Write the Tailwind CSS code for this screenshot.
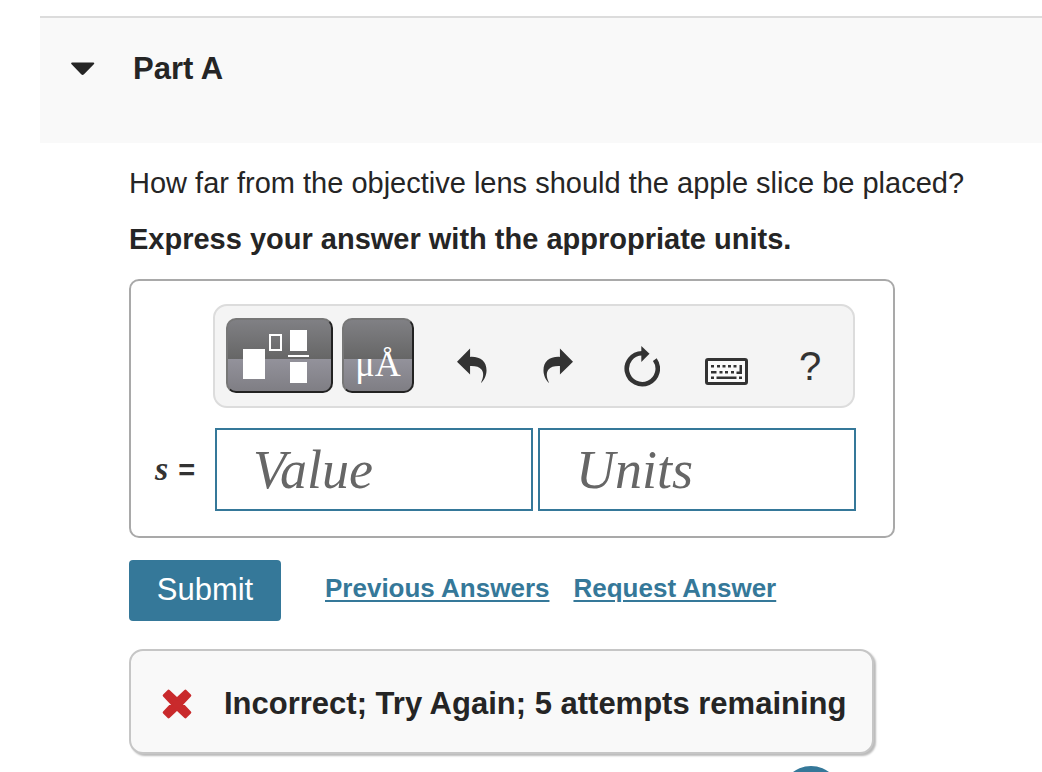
<!DOCTYPE html>
<html lang="en">
<head>
  <meta charset="UTF-8">
  <meta name="viewport" content="width=device-width, initial-scale=1.0">
  <title>Part A</title>
  <script src="https://cdn.jsdelivr.net/npm/@tailwindcss/browser@4"></script>
</head>
<body class="h-screen overflow-hidden bg-white pt-4 text-[#252525] font-['Liberation_Sans',Arial,sans-serif]">
  <!-- Part header -->
  <header class="ml-10 h-[127px] border-t-2 border-[#dcdcdc] bg-[#f9f9f9] pt-[31px]">
    <h2 class="text-[31px] leading-[40px] font-bold">
      <button type="button" aria-expanded="true" class="flex items-center gap-[38px] pl-[31px]">
        <svg class="w-6 h-[14px]" viewBox="0 0 24 14" fill="#252525" aria-hidden="true">
          <path d="M1.2 0.5H22.2C23.4 0.5 23.6 1.4 22.8 2.2L13 12.2C12 13.3 11.2 13.3 10.2 12.2L0.6 2.2C-0.2 1.4 0 0.5 1.2 0.5Z"/>
        </svg>
        Part A
      </button>
    </h2>
  </header>

  <main class="pl-[129px] pt-5">
    <p class="text-[29px] leading-[40px]">How far from the objective lens should the apple slice be placed?</p>
    <p class="mt-4 text-[29px] leading-[40px] font-bold">Express your answer with the appropriate units.</p>

    <form>
      <!-- Answer box -->
      <div class="mt-5 max-w-[766px] rounded-[10px] border-2 border-[#a9a9a9] pt-[23px] pb-[25px]">
        <div role="toolbar" class="ml-[82px] mr-[38px] flex h-[104px] items-start rounded-[14px] border-2 border-[#dcdcdc] bg-[#f4f4f4] pl-[11px] pt-3 text-[#333]">
          <button type="button" aria-label="Templates" class="h-[75px] w-[107px] rounded-[10px] border-2 border-t-[#777] border-l-[#777] border-r-[#222] border-b-[#222] bg-[linear-gradient(#808084_0%,#666_55%,#93929b_55%,#7f7e84_100%)]">
            <svg class="h-[71px] w-[103px]" viewBox="2 2 103 71" fill="#fff" aria-hidden="true">
              <rect x="17" y="31" width="22" height="30"/>
              <rect x="44" y="17" width="11" height="15" fill="none" stroke="#fff" stroke-width="2"/>
              <rect x="64" y="12" width="17" height="21"/>
              <rect x="62" y="37" width="21" height="2"/>
              <rect x="64" y="44" width="17" height="21"/>
            </svg>
          </button>
          <button type="button" aria-label="Symbols" class="ml-[9px] flex h-[75px] w-[72px] justify-center rounded-[10px] border-2 border-t-[#777] border-l-[#777] border-r-[#222] border-b-[#222] bg-[linear-gradient(#808084_0%,#666_55%,#93929b_55%,#7f7e84_100%)] pt-6 text-[36px] leading-[40px] text-white font-['Liberation_Serif',serif]">μÅ</button>

          <div class="ml-4 flex">
            <button type="button" aria-label="Undo" class="flex h-[75px] w-[84px] justify-center pt-[30px]">
              <svg class="h-9 w-[30px]" viewBox="0 0 31 36" fill="currentColor" aria-hidden="true">
                <path d="M0 13.5L13.5 0V8.6C24 8 30.5 13 30.5 22.5C30.5 28 28 32.5 25.3 35.3L24.9 35C27.5 30 27.8 25 25.5 22C23 18.6 19 17.8 13.5 18V26.8Z"/>
              </svg>
            </button>
            <button type="button" aria-label="Redo" class="flex h-[75px] w-[88px] justify-center pt-[30px]">
              <svg class="h-9 w-[30px]" viewBox="0 0 31 36" fill="currentColor" aria-hidden="true">
                <path d="M31 13.5L17.5 0V8.6C7 8 0.5 13 0.5 22.5C0.5 28 3 32.5 5.7 35.3L6.1 35C3.5 30 3.2 25 5.5 22C8 18.6 12 17.8 17.5 18V26.8Z"/>
              </svg>
            </button>
            <button type="button" aria-label="Reset" class="flex h-[75px] w-20 justify-center pt-7">
              <svg class="h-[42px] w-9" viewBox="0 0 36 42" fill="none" aria-hidden="true">
                <path d="M18 7.2A15.5 15.5 0 1 0 30.8 13.6" stroke="currentColor" stroke-width="4.6"/>
                <path d="M17.3 0L25.5 7.8L17.3 16Z" fill="currentColor"/>
              </svg>
            </button>
            <button type="button" aria-label="Keyboard" class="flex h-[75px] w-[88px] justify-center pt-10">
              <svg class="h-[27px] w-[43px]" viewBox="0 0 43 27" fill="currentColor" aria-hidden="true">
                <rect x="1.5" y="1.5" width="40" height="24" rx="1.5" fill="#fafafa" stroke="currentColor" stroke-width="3"/>
                <path d="M6 7h3v2.6H6zM12 7h3v2.6h-3zM17.5 7h3v2.6h-3zM23 7h3v2.6h-3zM28.5 7h3v2.6h-3zM34.5 7h2.5v9h-5.500v-2.600h3zM6 13h5.500v2.600H6zM14.500 13h3v2.600h-3zM20 13h3v2.600h-3zM26 13h3v2.600h-3zM6 18.500h3v2.600H6zM11.500 18.500h20v2.600h-20zM34 18.500h3v2.600h-3z"/>
              </svg>
            </button>
            <button type="button" aria-label="Help" class="flex h-[75px] w-20 justify-center pt-7 text-[40px] leading-[40px]">?</button>
          </div>
        </div>

        <div class="mt-5 mr-[37px] flex items-center">
          <label for="value" class="w-[84px] shrink-0 pl-6 text-[29px] leading-[40px] font-bold text-[#333]"><i class="mr-0.5 text-[34px] font-['Liberation_Serif',serif]">s</i> =</label>
          <div class="flex flex-1 gap-[5px]">
            <input id="value" type="text" placeholder="Value" class="h-[83px] w-0 flex-1 border-2 border-[#357899] pl-9 text-[54px] italic placeholder:text-[#666] font-['Liberation_Serif',serif]">
            <input type="text" aria-label="Units" placeholder="Units" class="h-[83px] w-0 flex-1 border-2 border-[#357899] pl-9 text-[54px] italic placeholder:text-[#666] font-['Liberation_Serif',serif]">
          </div>
        </div>
      </div>

      <div class="mt-[22px] flex h-[61px] text-[#357899]">
        <button type="submit" class="w-[152px] rounded-[4px] bg-[#357899] pb-0.5 text-[31px] leading-[40px] text-white">Submit</button>
        <a href="#" class="ml-11 self-start pt-2 text-[26px] leading-[40px] font-bold underline decoration-2 underline-offset-[3px]">Previous Answers</a>
        <a href="#" class="ml-6 self-start pt-2 text-[26px] leading-[40px] font-bold underline decoration-2 underline-offset-[3px]">Request Answer</a>
      </div>
    </form>

    <!-- Feedback -->
    <div role="alert" class="mt-7 flex h-[105px] max-w-[745px] items-center rounded-[14px] border-2 border-[#c6c6c6] bg-[#f9f9f9] pl-[31px] pt-1 shadow-[2px_2px_2px_#bbb]">
      <svg class="h-[30px] w-[30px] shrink-0" viewBox="0 0 30 30" fill="#c92a2c" stroke="#c92a2c" stroke-width="3" stroke-linejoin="round" aria-hidden="true">
        <path d="M6.500 2.200L15 10.200L23.500 2.200L27.800 6.500L19.800 15L27.800 23.500L23.500 27.800L15 19.800L6.500 27.800L2.200 23.500L10.200 15L2.200 6.500Z"/>
      </svg>
      <span class="ml-8 text-[31px] leading-[40px] font-bold">Incorrect; Try Again; 5 attempts remaining</span>
    </div>

    <button type="button" aria-label="Next part" class="mt-3 ml-[652px] block size-[60px] rounded-full bg-[#357899]"></button>
  </main>
</body>
</html>
